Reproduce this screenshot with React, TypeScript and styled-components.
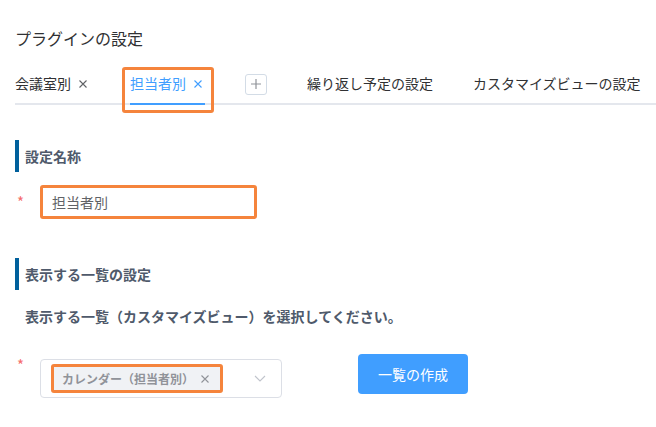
import React from 'react';
import styled, { createGlobalStyle, css } from 'styled-components';

const GlobalStyle = createGlobalStyle`
  body {
    margin: 0;
    background: #ffffff;
    font-family: "Noto Sans CJK JP", "Noto Sans", sans-serif;
  }
`;

const highlightBox = css`
  border: 3px solid #f5843c;
  border-radius: 3px;
`;

const Page = styled.div`
  padding: 26px 0 40px 15px;
  overflow: hidden;
`;

const Title = styled.h1`
  margin: 0 0 13px;
  font-size: 16px;
  line-height: 24px;
  font-weight: 400;
  color: #303133;
`;

const TabBar = styled.div`
  display: flex;
  border-bottom: 2px solid #e4e7ed;
  white-space: nowrap;
`;

interface TabProps {
  $active?: boolean;
  $first?: boolean;
  $highlighted?: boolean;
}

const Tab = styled.div<TabProps>`
  position: relative;
  z-index: 1;
  display: flex;
  align-items: center;
  flex-shrink: 0;
  height: 40px;
  padding: 0 20px;
  padding-left: ${(p) => (p.$first ? '0' : '20px')};
  font-size: 14px;
  line-height: 40px;
  color: ${(p) => (p.$active ? '#409eff' : '#303133')};

  ${(p) =>
    p.$active &&
    css`
      &::before {
        content: '';
        position: absolute;
        left: 20px;
        right: 20px;
        bottom: -2px;
        height: 2px;
        background: #409eff;
      }
    `}

  ${(p) =>
    p.$highlighted &&
    css`
      &::after {
        content: '';
        position: absolute;
        top: 4px;
        left: 12px;
        right: 11px;
        bottom: -10px;
        ${highlightBox}
        pointer-events: none;
      }
    `}
`;

const TabClose = styled.svg`
  width: 14px;
  height: 14px;
  margin-left: 5px;
  margin-top: 2px;
`;

const NewTabButton = styled.span`
  display: flex;
  align-items: center;
  justify-content: center;
  width: 22px;
  height: 21px;
  margin-top: 2px;
  box-sizing: border-box;
  border: 1px solid #d3dce6;
  border-radius: 3px;
`;

const Section = styled.section<{ $gap: number }>`
  margin-top: ${(p) => p.$gap}px;
`;

const SectionHeader = styled.h2`
  margin: 0;
  height: 32px;
  padding-left: 6px;
  border-left: 4px solid #00609c;
  font-size: 14px;
  line-height: 32px;
  font-weight: 700;
  color: #4f5a6b;
`;

const Description = styled.p`
  margin: 15px 0 0 10px;
  font-size: 14px;
  line-height: 22px;
  font-weight: 700;
  color: #4f5a6b;
`;

const FormRow = styled.div<{ $gap: number }>`
  display: flex;
  align-items: flex-start;
  margin-top: ${(p) => p.$gap}px;
`;

const RequiredMark = styled.span<{ $offset: number }>`
  width: 23px;
  padding-left: 2px;
  margin-top: ${(p) => p.$offset}px;
  font-size: 15px;
  line-height: 14px;
  color: #f56c6c;
`;

const NameInput = styled.input`
  width: 217px;
  height: 34px;
  box-sizing: border-box;
  padding: 0 9px;
  ${highlightBox}
  outline: none;
  font-family: inherit;
  font-size: 14px;
  color: #606266;
  background: #ffffff;
`;

const SelectBox = styled.div`
  display: flex;
  align-items: center;
  width: 242px;
  height: 39px;
  margin-top: 5px;
  box-sizing: border-box;
  padding: 0 15px 0 10px;
  border: 1px solid #dcdfe6;
  border-radius: 4px;
`;

const Tag = styled.span`
  display: flex;
  align-items: center;
  height: 29px;
  box-sizing: border-box;
  padding: 0 10px 0 8px;
  ${highlightBox}
  background: #f0f2f5;
  font-size: 12px;
  font-weight: 700;
  color: #909399;
`;

const TagClose = styled.svg`
  width: 10px;
  height: 10px;
  margin-left: 6px;
`;

const Chevron = styled.svg`
  width: 12px;
  height: 7px;
  margin-left: auto;
`;

const PrimaryButton = styled.button`
  width: 110px;
  height: 40px;
  margin-left: 76px;
  border: none;
  border-radius: 4px;
  background: #409eff;
  font-family: inherit;
  font-size: 14px;
  color: #ffffff;
`;

const CloseIcon = ({ color }: { color: string }) => (
  <TabClose viewBox="0 0 14 14">
    <path d="M3.5 3.5 L10.5 10.5 M10.5 3.5 L3.5 10.5" stroke={color} strokeWidth="1.1" fill="none" />
  </TabClose>
);

const tabs = [
  { label: '会議室別', closable: true },
  { label: '担当者別', closable: true, active: true },
];

export default function App() {
  return (
    <Page>
      <GlobalStyle />
      <Title>プラグインの設定</Title>
      <TabBar>
        {tabs.map((tab, i) => (
          <Tab key={tab.label} $first={i === 0} $active={tab.active} $highlighted={tab.active}>
            {tab.label}
            <CloseIcon color={tab.active ? '#409eff' : '#606266'} />
          </Tab>
        ))}
        <Tab>
          <NewTabButton>
            <svg width="10" height="10" viewBox="0 0 10 10">
              <path d="M5 0 V10 M0 5 H10" stroke="#909399" strokeWidth="1.2" fill="none" />
            </svg>
          </NewTabButton>
        </Tab>
        <Tab>繰り返し予定の設定</Tab>
        <Tab>カスタマイズビューの設定</Tab>
      </TabBar>

      <Section $gap={35}>
        <SectionHeader>設定名称</SectionHeader>
        <FormRow $gap={13}>
          <RequiredMark $offset={10}>*</RequiredMark>
          <NameInput readOnly value="担当者別" />
        </FormRow>
      </Section>

      <Section $gap={39}>
        <SectionHeader>表示する一覧の設定</SectionHeader>
        <Description>表示する一覧（カスタマイズビュー）を選択してください。</Description>
        <FormRow $gap={27}>
          <RequiredMark $offset={4}>*</RequiredMark>
          <SelectBox>
            <Tag>
              カレンダー（担当者別）
              <TagClose viewBox="0 0 10 10">
                <path d="M1.5 1.5 L8.5 8.5 M8.5 1.5 L1.5 8.5" stroke="#909399" strokeWidth="1.1" fill="none" />
              </TagClose>
            </Tag>
            <Chevron viewBox="0 0 12 7">
              <path d="M1 1 L6 6 L11 1" stroke="#c0c4cc" strokeWidth="1.1" fill="none" />
            </Chevron>
          </SelectBox>
          <PrimaryButton>一覧の作成</PrimaryButton>
        </FormRow>
      </Section>
    </Page>
  );
}
